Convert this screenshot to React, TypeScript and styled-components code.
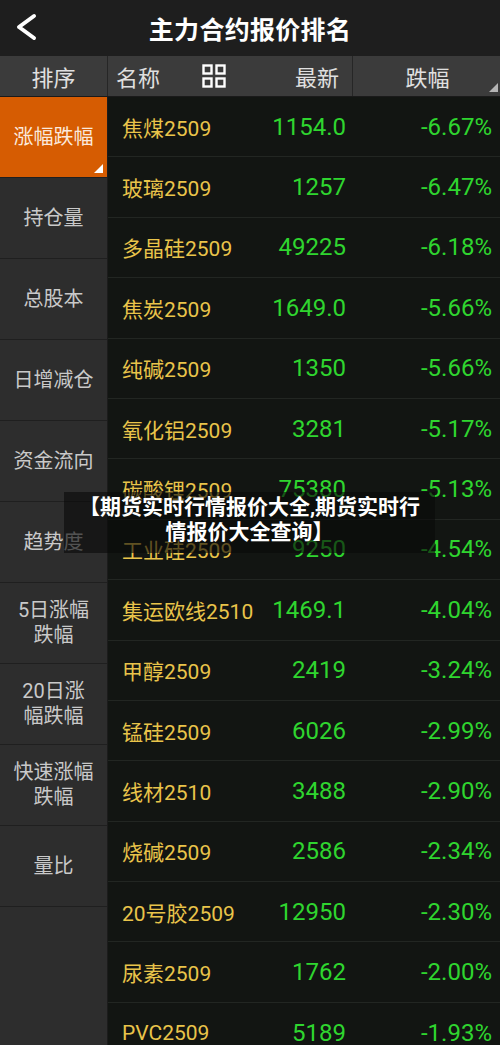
import { createGlobalStyle, styled } from 'styled-components';

const GlobalStyle = createGlobalStyle`
  html, body {
    margin: 0;
    padding: 0;
    background: #121512;
  }
  body {
    font-family: Roboto, 'Noto Sans CJK SC', sans-serif;
  }
`;

const tabs = [
  ['涨幅跌幅'],
  ['持仓量'],
  ['总股本'],
  ['日增减仓'],
  ['资金流向'],
  ['趋势度'],
  ['5日涨幅', '跌幅'],
  ['20日涨', '幅跌幅'],
  ['快速涨幅', '跌幅'],
  ['量比'],
];

const quotes = [
  { name: '焦煤2509', price: '1154.0', pct: '-6.67%' },
  { name: '玻璃2509', price: '1257', pct: '-6.47%' },
  { name: '多晶硅2509', price: '49225', pct: '-6.18%' },
  { name: '焦炭2509', price: '1649.0', pct: '-5.66%' },
  { name: '纯碱2509', price: '1350', pct: '-5.66%' },
  { name: '氧化铝2509', price: '3281', pct: '-5.17%' },
  { name: '碳酸锂2509', price: '75380', pct: '-5.13%' },
  { name: '工业硅2509', price: '9250', pct: '-4.54%' },
  { name: '集运欧线2510', price: '1469.1', pct: '-4.04%' },
  { name: '甲醇2509', price: '2419', pct: '-3.24%' },
  { name: '锰硅2509', price: '6026', pct: '-2.99%' },
  { name: '线材2510', price: '3488', pct: '-2.90%' },
  { name: '烧碱2509', price: '2586', pct: '-2.34%' },
  { name: '20号胶2509', price: '12950', pct: '-2.30%' },
  { name: '尿素2509', price: '1762', pct: '-2.00%' },
  { name: 'PVC2509', price: '5189', pct: '-1.93%' },
];

export default function App() {
  return (
    <Page>
      <GlobalStyle />
      <TopBar>
        <BackButton aria-label="返回">
          <svg width="22" height="28" viewBox="0 0 22 28">
            <path d="M19 3 L4 14 L19 25" fill="none" stroke="#fff" strokeWidth="4" strokeLinecap="round" strokeLinejoin="round" />
          </svg>
        </BackButton>
        <Title>主力合约报价排名</Title>
      </TopBar>

      <HeaderRow>
        <HeaderCell>排序</HeaderCell>
        <NameHeader>
          <span>名称</span>
          <svg width="24" height="24" viewBox="0 0 24 24">
            <g fill="none" stroke="#fff" strokeWidth="2.4">
              <rect x="1.5" y="1.5" width="8" height="8" />
              <rect x="14.5" y="1.5" width="8" height="8" />
              <rect x="1.5" y="14.5" width="8" height="8" />
              <rect x="14.5" y="14.5" width="8" height="8" />
            </g>
          </svg>
          <PriceLabel>最新</PriceLabel>
        </NameHeader>
        <HeaderCell>
          跌幅
          <Corner color="#b5b5b5" />
        </HeaderCell>
      </HeaderRow>

      <Body>
        <Sidebar>
          {tabs.map((lines, i) => (
            <Tab key={i} active={i === 0}>
              <div>
                {lines.map((l) => (
                  <div key={l}>{l}</div>
                ))}
              </div>
              {i === 0 && <Corner color="#ffffff" />}
            </Tab>
          ))}
        </Sidebar>
        <Table>
          {quotes.map((q) => (
            <Row key={q.name}>
              <Name>{q.name}</Name>
              <Num>{q.price}</Num>
              <Num>{q.pct}</Num>
            </Row>
          ))}
        </Table>
      </Body>

      <Banner>
        【期货实时行情报价大全,期货实时行
        <br />
        情报价大全查询】
      </Banner>
    </Page>
  );
}

const Page = styled.div`
  position: relative;
  width: 500px;
  height: 1045px;
  overflow: hidden;
  background: #121512;
  font-family: Roboto, 'Noto Sans CJK SC', sans-serif;
`;

const TopBar = styled.div`
  height: 56px;
  background: #1e1e1e;
  display: flex;
  align-items: center;
  justify-content: center;
  position: relative;
`;

const BackButton = styled.div`
  position: absolute;
  left: 15px;
  top: 13px;
  display: flex;
`;

const Title = styled.div`
  color: #ffffff;
  font-size: 25px;
  font-weight: 700;
  letter-spacing: 0.3px;
`;

const HeaderRow = styled.div`
  height: 40px;
  display: grid;
  grid-template-columns: 107px 244px 149px;
  column-gap: 1px;
  background: #262626;
  border-bottom: 1px solid #1a1a1a;
`;

const HeaderCell = styled.div`
  position: relative;
  background: #3b3b3b;
  color: #e0e0e0;
  font-size: 22px;
  display: flex;
  align-items: center;
  justify-content: center;
`;

const NameHeader = styled.div`
  background: #3b3b3b;
  color: #e0e0e0;
  font-size: 22px;
  display: flex;
  align-items: center;
  padding: 0 13px 0 8px;

  svg {
    margin-left: 42px;
  }
`;

const PriceLabel = styled.span`
  margin-left: auto;
`;

const Corner = styled.span<{ color: string }>`
  position: absolute;
  right: 4px;
  bottom: 4px;
  width: 0;
  height: 0;
  border-style: solid;
  border-width: 0 0 9px 9px;
  border-color: transparent transparent ${({ color }) => color} transparent;
`;

const Body = styled.div`
  display: flex;
`;

const Sidebar = styled.div`
  width: 107px;
  flex-shrink: 0;
  background: #2d2d2d;
  border-right: 1px solid #1c1c1c;
  min-height: 949px;
`;

const Tab = styled.div<{ active: boolean }>`
  position: relative;
  height: 80px;
  border-bottom: 1px solid #1f1f1f;
  display: flex;
  align-items: center;
  justify-content: center;
  text-align: center;
  font-size: 20px;
  line-height: 25px;
  background: ${({ active }) => (active ? '#d65c02' : '#2d2d2d')};
  color: ${({ active }) => (active ? '#fbe9dc' : '#c9c9c9')};
`;

const Table = styled.div`
  flex: 1;
  background: #121512;
`;

const Row = styled.div`
  height: 59.4px;
  border-bottom: 1px solid #222622;
  display: grid;
  grid-template-columns: 1fr 90px 146px;
  align-items: center;
  padding: 0 8px 0 14px;
`;

const Name = styled.div`
  color: #e9c44a;
  font-size: 21px;
  white-space: nowrap;
`;

const Num = styled.div`
  color: #2fd52f;
  font-size: 24px;
  text-align: right;
`;

const Banner = styled.div`
  position: absolute;
  left: 64px;
  top: 492px;
  width: 371px;
  height: 61px;
  box-sizing: border-box;
  padding-top: 3px;
  background: rgba(10, 10, 10, 0.62);
  color: #ffffff;
  font-size: 21px;
  font-weight: 700;
  line-height: 25px;
  text-align: center;
`;
